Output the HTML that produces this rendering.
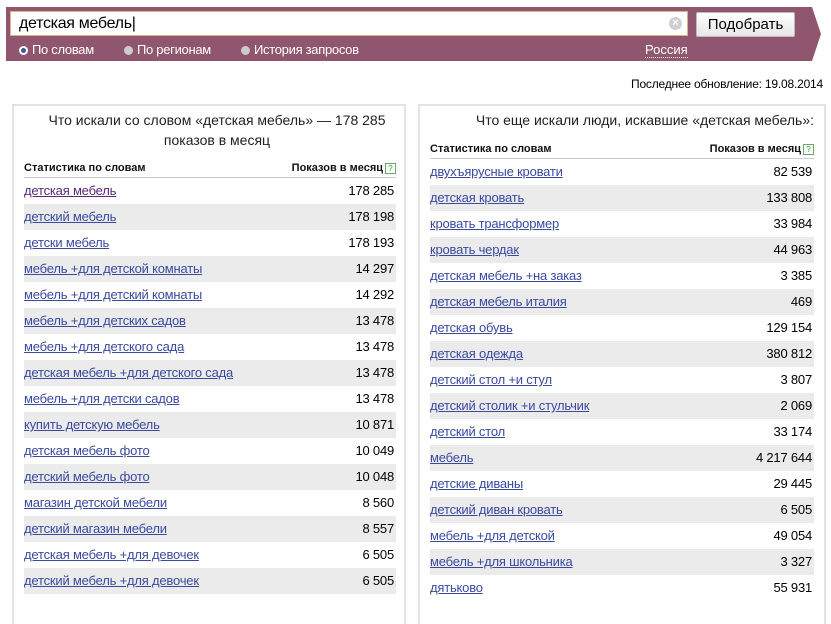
<!DOCTYPE html>
<html><head><meta charset="utf-8"><style>
body{margin:0;width:831px;height:600px;overflow:hidden;background:#fff;font-family:"Liberation Sans",Arial,sans-serif;font-size:13px;color:#000;position:relative}
.band{position:absolute;left:6px;top:7px;width:806px;height:54px;background:#91566f}
.arrow{position:absolute;left:812px;top:7px;width:0;height:0;border-top:27px solid transparent;border-bottom:27px solid transparent;border-left:9px solid #91566f}
.inp{position:absolute;left:10px;top:11px;width:678px;height:25px;background:#fff;border:1px solid #d9b48a;box-sizing:border-box;font-size:16px;line-height:23px;padding-left:8px;letter-spacing:-0.3px}
.clr{position:absolute;left:669px;top:17px;width:13px;height:13px;border-radius:50%;background:#d0d0d0;color:#fff;font-size:11px;line-height:13px;text-align:center;font-weight:bold}
.btn{position:absolute;left:696px;top:12px;width:99px;height:25px;border-radius:2px;background:linear-gradient(#fff,#e6e6e6);border:1px solid #bbb;box-sizing:border-box;text-align:center;font-size:15px;line-height:23px}
.rad{position:absolute;top:42px;color:#fff;font-size:13px;letter-spacing:-0.3px}
.rad i{display:inline-block;width:9px;height:9px;border-radius:50%;background:#ccc;margin-right:4px;vertical-align:-1px}
.rus{position:absolute;left:645px;top:42px;color:#fff;border-bottom:1px dotted #fff;line-height:15px}
.upd{position:absolute;right:8px;top:77px;font-size:12px;letter-spacing:-0.2px}
.panel{position:absolute;top:104px;border:2px solid #e3e3e3;border-bottom:none;height:520px;box-sizing:border-box}
.ttl{font-size:14px;line-height:20px;color:#222;white-space:nowrap}
.hd{display:flex;justify-content:space-between;font-size:11px;font-weight:bold;border-bottom:1px solid #ccc;height:18px;line-height:18px;color:#111}
.q{display:inline-block;width:9px;height:9px;border:1px solid #6a6;font-size:8px;line-height:9px;text-align:center;color:#393;vertical-align:0;margin-left:2px;font-weight:normal}
.row{display:flex;justify-content:space-between;height:26px;line-height:26px;padding-right:2px;letter-spacing:-0.2px}
.row a{color:#3a4aa0;text-decoration:underline}
</style></head><body>
<div class="band"></div><div class="arrow"></div>
<div class="inp">детская мебель|</div><div class="clr">×</div>
<div class="btn">Подобрать</div>
<div class="rad" style="left:19px"><i style="background:#fff;box-shadow:inset 0 0 0 2px #fff,inset 0 0 0 5px #3a5a9a"></i>По словам</div>
<div class="rad" style="left:124px"><i></i>По регионам</div>
<div class="rad" style="left:241px"><i></i>История запросов</div>
<div class="rus">Россия</div>
<div class="upd">Последнее обновление: 19.08.2014</div>

<div class="panel" style="left:12px;width:394px;padding:4px 8px 0 10px">
<div class="ttl" style="text-align:center;padding-left:14px">Что искали со словом «детская мебель» — 178 285<br>показов в месяц</div>
<div style="height:9px"></div>
<div class="hd"><span>Статистика по словам</span><span>Показов в месяц<span class="q">?</span></span></div>
<div>
<div class="row" style="background:#fff"><a style="color:#5a2a7a">детская мебель</a><span>178 285</span></div>
<div class="row" style="background:#ebebeb"><a>детский мебель</a><span>178 198</span></div>
<div class="row" style="background:#fff"><a>детски мебель</a><span>178 193</span></div>
<div class="row" style="background:#ebebeb"><a>мебель +для детской комнаты</a><span>14 297</span></div>
<div class="row" style="background:#fff"><a>мебель +для детский комнаты</a><span>14 292</span></div>
<div class="row" style="background:#ebebeb"><a>мебель +для детских садов</a><span>13 478</span></div>
<div class="row" style="background:#fff"><a>мебель +для детского сада</a><span>13 478</span></div>
<div class="row" style="background:#ebebeb"><a>детская мебель +для детского сада</a><span>13 478</span></div>
<div class="row" style="background:#fff"><a>мебель +для детски садов</a><span>13 478</span></div>
<div class="row" style="background:#ebebeb"><a>купить детскую мебель</a><span>10 871</span></div>
<div class="row" style="background:#fff"><a>детская мебель фото</a><span>10 049</span></div>
<div class="row" style="background:#ebebeb"><a>детский мебель фото</a><span>10 048</span></div>
<div class="row" style="background:#fff"><a>магазин детской мебели</a><span>8 560</span></div>
<div class="row" style="background:#ebebeb"><a>детский магазин мебели</a><span>8 557</span></div>
<div class="row" style="background:#fff"><a>детская мебель +для девочек</a><span>6 505</span></div>
<div class="row" style="background:#ebebeb"><a>детский мебель +для девочек</a><span>6 505</span></div>
</div></div>

<div class="panel" style="left:418px;width:408px;padding:4px 10px 0 10px">
<div class="ttl" style="text-align:right">Что еще искали люди, искавшие «детская мебель»:</div>
<div style="height:10px"></div>
<div class="hd"><span>Статистика по словам</span><span>Показов в месяц<span class="q">?</span></span></div>
<div>
<div class="row" style="background:#fff"><a>двухъярусные кровати</a><span>82 539</span></div>
<div class="row" style="background:#ebebeb"><a>детская кровать</a><span>133 808</span></div>
<div class="row" style="background:#fff"><a>кровать трансформер</a><span>33 984</span></div>
<div class="row" style="background:#ebebeb"><a>кровать чердак</a><span>44 963</span></div>
<div class="row" style="background:#fff"><a>детская мебель +на заказ</a><span>3 385</span></div>
<div class="row" style="background:#ebebeb"><a>детская мебель италия</a><span>469</span></div>
<div class="row" style="background:#fff"><a>детская обувь</a><span>129 154</span></div>
<div class="row" style="background:#ebebeb"><a>детская одежда</a><span>380 812</span></div>
<div class="row" style="background:#fff"><a>детский стол +и стул</a><span>3 807</span></div>
<div class="row" style="background:#ebebeb"><a>детский столик +и стульчик</a><span>2 069</span></div>
<div class="row" style="background:#fff"><a>детский стол</a><span>33 174</span></div>
<div class="row" style="background:#ebebeb"><a>мебель</a><span>4 217 644</span></div>
<div class="row" style="background:#fff"><a>детские диваны</a><span>29 445</span></div>
<div class="row" style="background:#ebebeb"><a>детский диван кровать</a><span>6 505</span></div>
<div class="row" style="background:#fff"><a>мебель +для детской</a><span>49 054</span></div>
<div class="row" style="background:#ebebeb"><a>мебель +для школьника</a><span>3 327</span></div>
<div class="row" style="background:#fff"><a>дятьково</a><span>55 931</span></div>
</div></div>
</body></html>
